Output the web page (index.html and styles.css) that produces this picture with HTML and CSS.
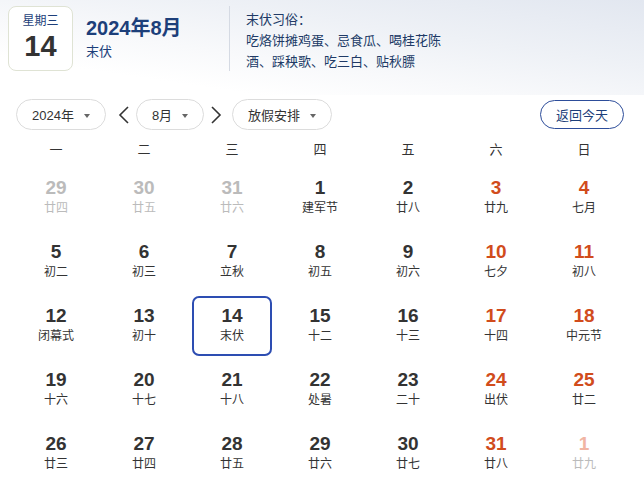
FILE: index.html
```html
<!DOCTYPE html>
<html lang="zh-CN">
<head>
<meta charset="utf-8">
<link rel="stylesheet" href="styles.css">
</head>
<body>
<div class="page">
  <header class="header">
    <div class="datebox">
      <div class="weekday">星期三</div>
      <div class="daynum">14</div>
    </div>
    <div class="titleblock">
      <div class="title">2024年8月</div>
      <div class="subtitle">末伏</div>
    </div>
    <div class="customs">
      <div>末伏习俗：</div>
      <div>吃烙饼摊鸡蛋、忌食瓜、喝桂花陈</div>
      <div>酒、踩秧歌、吃三白、贴秋膘</div>
    </div>
  </header>

  <div class="controls">
    <div class="pill pill-year">2024年<span class="caret"></span></div>
    <svg class="arrow" viewBox="0 0 12 18" width="12" height="18"><path d="M10 1 L2 9 L10 17" fill="none" stroke="#333" stroke-width="1.6"/></svg>
    <div class="pill pill-month">8月<span class="caret"></span></div>
    <svg class="arrow" viewBox="0 0 12 18" width="12" height="18"><path d="M2 1 L10 9 L2 17" fill="none" stroke="#333" stroke-width="1.6"/></svg>
    <div class="pill pill-holiday">放假安排<span class="caret"></span></div>
    <div class="spacer"></div>
    <div class="today-btn">返回今天</div>
  </div>

  <div class="weekhead">
    <div>一</div><div>二</div><div>三</div><div>四</div><div>五</div><div>六</div><div>日</div>
  </div>

  <div class="grid">
    <div class="cell"><div class="day other"><span class="n">29</span><span class="l">廿四</span></div></div>
    <div class="cell"><div class="day other"><span class="n">30</span><span class="l">廿五</span></div></div>
    <div class="cell"><div class="day other"><span class="n">31</span><span class="l">廿六</span></div></div>
    <div class="cell"><div class="day"><span class="n">1</span><span class="l">建军节</span></div></div>
    <div class="cell"><div class="day"><span class="n">2</span><span class="l">廿八</span></div></div>
    <div class="cell"><div class="day wk"><span class="n">3</span><span class="l">廿九</span></div></div>
    <div class="cell"><div class="day wk"><span class="n">4</span><span class="l">七月</span></div></div>

    <div class="cell"><div class="day"><span class="n">5</span><span class="l">初二</span></div></div>
    <div class="cell"><div class="day"><span class="n">6</span><span class="l">初三</span></div></div>
    <div class="cell"><div class="day"><span class="n">7</span><span class="l">立秋</span></div></div>
    <div class="cell"><div class="day"><span class="n">8</span><span class="l">初五</span></div></div>
    <div class="cell"><div class="day"><span class="n">9</span><span class="l">初六</span></div></div>
    <div class="cell"><div class="day wk"><span class="n">10</span><span class="l">七夕</span></div></div>
    <div class="cell"><div class="day wk"><span class="n">11</span><span class="l">初八</span></div></div>

    <div class="cell"><div class="day"><span class="n">12</span><span class="l">闭幕式</span></div></div>
    <div class="cell"><div class="day"><span class="n">13</span><span class="l">初十</span></div></div>
    <div class="cell"><div class="day selected"><span class="n">14</span><span class="l">末伏</span></div></div>
    <div class="cell"><div class="day"><span class="n">15</span><span class="l">十二</span></div></div>
    <div class="cell"><div class="day"><span class="n">16</span><span class="l">十三</span></div></div>
    <div class="cell"><div class="day wk"><span class="n">17</span><span class="l">十四</span></div></div>
    <div class="cell"><div class="day wk"><span class="n">18</span><span class="l">中元节</span></div></div>

    <div class="cell"><div class="day"><span class="n">19</span><span class="l">十六</span></div></div>
    <div class="cell"><div class="day"><span class="n">20</span><span class="l">十七</span></div></div>
    <div class="cell"><div class="day"><span class="n">21</span><span class="l">十八</span></div></div>
    <div class="cell"><div class="day"><span class="n">22</span><span class="l">处暑</span></div></div>
    <div class="cell"><div class="day"><span class="n">23</span><span class="l">二十</span></div></div>
    <div class="cell"><div class="day wk"><span class="n">24</span><span class="l">出伏</span></div></div>
    <div class="cell"><div class="day wk"><span class="n">25</span><span class="l">廿二</span></div></div>

    <div class="cell"><div class="day"><span class="n">26</span><span class="l">廿三</span></div></div>
    <div class="cell"><div class="day"><span class="n">27</span><span class="l">廿四</span></div></div>
    <div class="cell"><div class="day"><span class="n">28</span><span class="l">廿五</span></div></div>
    <div class="cell"><div class="day"><span class="n">29</span><span class="l">廿六</span></div></div>
    <div class="cell"><div class="day"><span class="n">30</span><span class="l">廿七</span></div></div>
    <div class="cell"><div class="day wk"><span class="n">31</span><span class="l">廿八</span></div></div>
    <div class="cell"><div class="day wk other"><span class="n">1</span><span class="l">廿九</span></div></div>
  </div>
</div>
</body>
</html>
```

FILE: styles.css
```css
html, body {
  margin: 0;
  padding: 0;
  background: #fff;
}
body {
  font-family: "Liberation Sans", "Noto Sans CJK SC", sans-serif;
  color: #333;
  width: 644px;
  height: 493px;
  overflow: hidden;
}
.header {
  display: flex;
  align-items: flex-start;
  padding: 6px 8px 0 8px;
  height: 95px;
  box-sizing: border-box;
  background: linear-gradient(to bottom left, #e2e7f0 0%, #eef1f6 35%, #f8f9fb 60%, #ffffff 80%);
}
.datebox {
  width: 65px;
  height: 65px;
  box-sizing: border-box;
  border: 1px solid #dfe3d4;
  border-radius: 8px;
  background: #fff;
  display: flex;
  flex-direction: column;
  align-items: center;
}
.weekday {
  font-size: 12px;
  line-height: 14px;
  color: #1d3f7a;
  margin-top: 7px;
}
.daynum {
  font-size: 29px;
  font-weight: bold;
  line-height: 34px;
  color: #333;
  margin-top: 1px;
}
.titleblock {
  margin-left: 13px;
  width: 143px;
  padding-top: 9px;
}
.title {
  font-size: 20px;
  font-weight: bold;
  line-height: 26px;
  color: #1d3f7a;
}
.subtitle {
  font-size: 13px;
  line-height: 18px;
  color: #1d3f7a;
  margin-top: 2px;
}
.customs {
  border-left: 1px solid #d5dae3;
  height: 65px;
  padding-left: 16px;
  padding-top: 3px;
  box-sizing: border-box;
  font-size: 13px;
  line-height: 21px;
  color: #203a66;
}
.controls {
  display: flex;
  align-items: center;
  padding: 4px 20px 0 16px;
  height: 31px;
}
.pill {
  height: 31px;
  box-sizing: border-box;
  border: 1px solid #dcdcdc;
  border-radius: 16px;
  display: flex;
  align-items: center;
  justify-content: center;
  font-size: 13px;
  color: #333;
  background: #fff;
}
.pill-year { width: 90px; }
.pill-month { width: 68px; }
.pill-holiday { width: 100px; }
.caret {
  width: 0;
  height: 0;
  border-left: 3.5px solid transparent;
  border-right: 3.5px solid transparent;
  border-top: 4px solid #666;
  margin-left: 10px;
  margin-top: 2px;
}
.arrow {
  margin: 0 6px 0 12px;
}
.pill-month + .arrow {
  margin: 0 10px 0 6px;
}
.spacer { flex: 1; }
.today-btn {
  width: 84px;
  height: 29px;
  box-sizing: border-box;
  border: 1px solid #2d4d9a;
  border-radius: 15px;
  display: flex;
  align-items: center;
  justify-content: center;
  font-size: 13px;
  color: #1d3f7a;
}
.weekhead {
  display: grid;
  grid-template-columns: repeat(7, 88px);
  margin: 9px 0 0 12px;
  height: 22px;
  line-height: 22px;
  font-size: 13px;
  color: #333;
  text-align: center;
}
.grid {
  display: grid;
  grid-template-columns: repeat(7, 88px);
  grid-auto-rows: 64px;
  margin: 5px 0 0 12px;
}
.cell {
  padding: 2px 4px;
}
.day {
  height: 60px;
  box-sizing: border-box;
  display: flex;
  flex-direction: column;
  align-items: center;
  padding-top: 7px;
  border: 2px solid transparent;
  border-radius: 7px;
}
.day.selected {
  border-color: #2d4db2;
}
.n {
  font-size: 19px;
  font-weight: bold;
  line-height: 22px;
  color: #333;
}
.l {
  font-size: 12px;
  line-height: 16px;
  margin-top: 1px;
  color: #333;
}
.wk .n { color: #d14c1c; }
.other .n { color: #bbbbbb; }
.other .l { color: #bbbbbb; }
.wk.other .n { color: #f1b5a3; }
```
